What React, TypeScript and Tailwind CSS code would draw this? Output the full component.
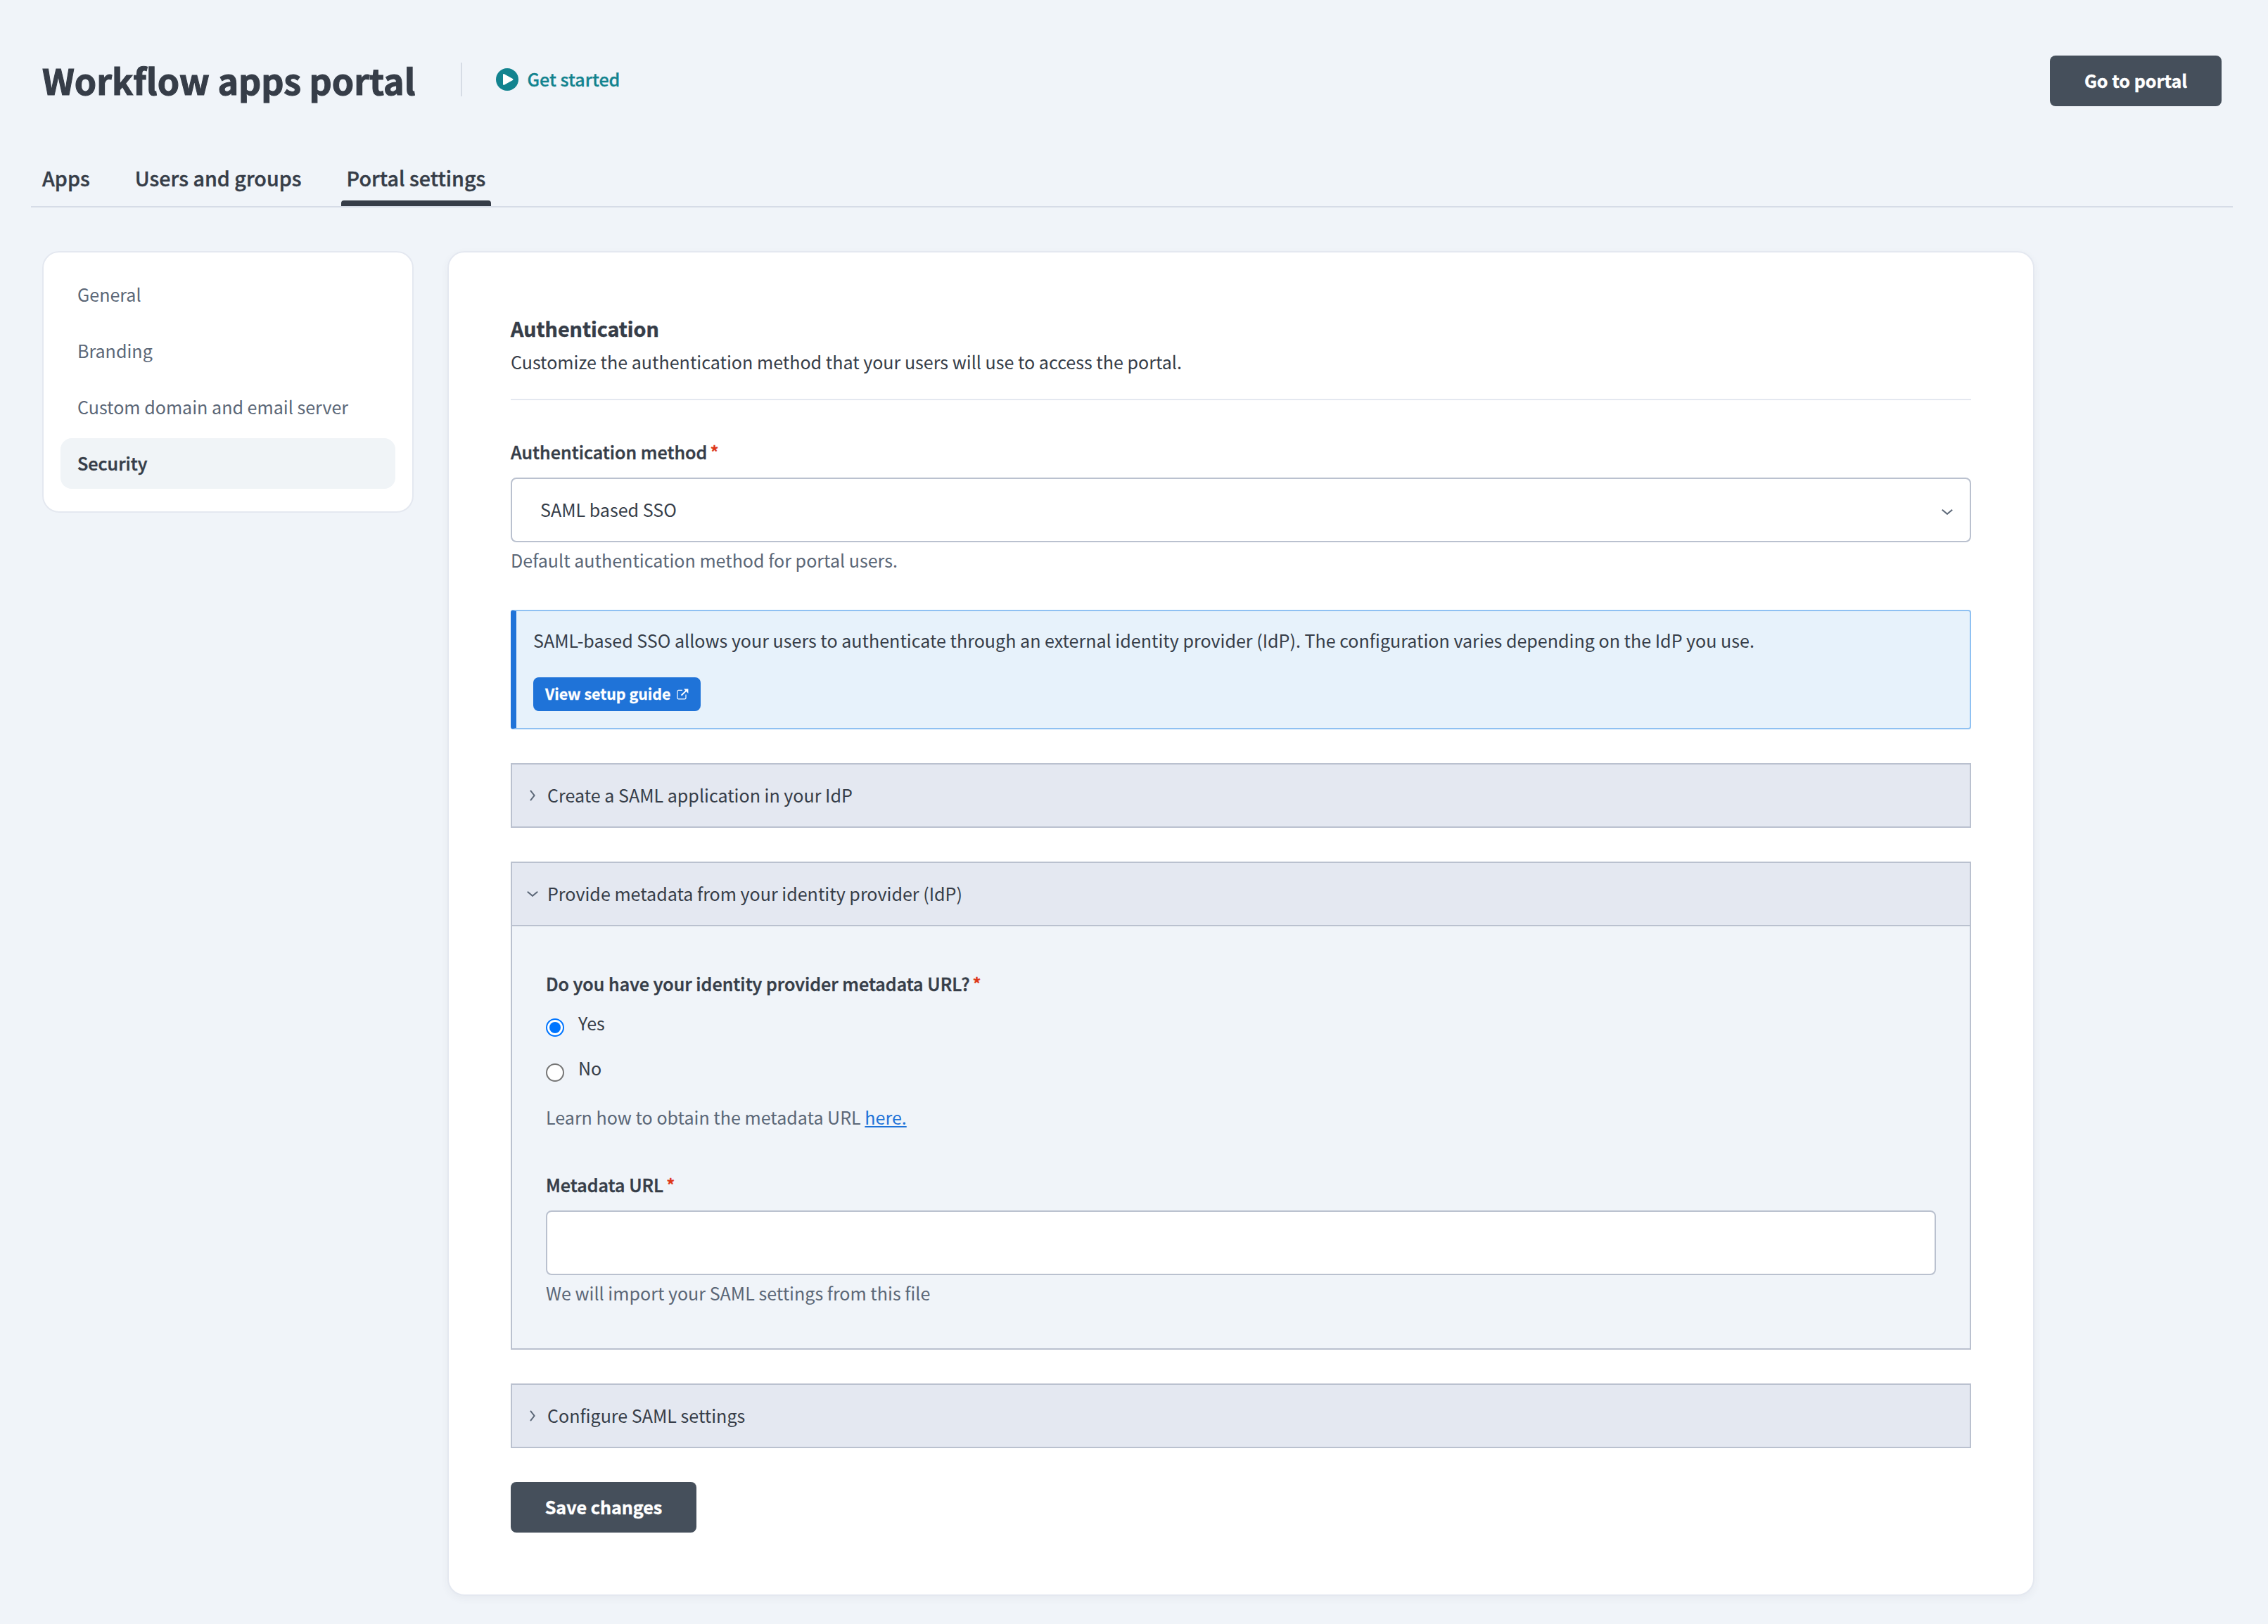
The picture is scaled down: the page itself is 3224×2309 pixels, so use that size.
import type { ReactNode } from "react";

const tabs = ["Apps", "Users and groups", "Portal settings"];

const sections = ["General", "Branding", "Custom domain and email server", "Security"];

const ChevronRight = () => (
  <svg width="8" height="16" viewBox="0 0 8 16" fill="none" className="shrink-0">
    <path d="M1 0.8L6.6 8L1 15.2" stroke="#5b6777" strokeWidth="2" />
  </svg>
);

const ChevronDown = () => (
  <svg width="16" height="8" viewBox="0 0 16 8" fill="none" className="shrink-0">
    <path d="M0.8 0.8L8 6.8L15.2 0.8" stroke="#5b6777" strokeWidth="2" />
  </svg>
);

const PlayIcon = () => (
  <svg width="32" height="32" viewBox="0 0 32 32" className="shrink-0">
    <circle cx="16" cy="16" r="16" fill="#12838f" />
    <path d="M10 9.2c0-.9.9-1.4 1.7-1l12.2 6.9c.8.4.8 1.4 0 1.8l-12.2 6.9c-.8.4-1.7-.1-1.7-1z" fill="#fff" />
  </svg>
);

const ExternalIcon = () => (
  <svg width="17" height="16" viewBox="0 0 17 16" fill="none" stroke="#fff" className="shrink-0">
    <path d="M8 2.4H2.6A1.6 1.6 0 0 0 1 4v9.2a1.6 1.6 0 0 0 1.6 1.6h8.8a1.6 1.6 0 0 0 1.6-1.6V8.6" strokeWidth="1.2" />
    <path d="M6.5 9.8L14 2.4" strokeWidth="1.9" />
    <path d="M10 .6h6.4V7z" fill="#fff" stroke="none" />
  </svg>
);

const Label = ({ children }: { children: ReactNode }) => (
  <div className="font-medium tracking-[0.06px]">
    <span className="[-webkit-text-stroke:0.5px]">{children}</span>
    <span className="ml-1 text-[#de3618] [-webkit-text-stroke:0.5px]">*</span>
  </div>
);

const PanelHeader = ({ title, open = false }: { title: string; open?: boolean }) => (
  <div className="flex h-[88px] items-center bg-[#e4e8f1]">
    <div className="flex w-[50px] justify-center pl-2">{open ? <ChevronDown /> : <ChevronRight />}</div>
    <span className="pb-0.5">{title}</span>
  </div>
);

const Radio = ({ label, checked = false }: { label: string; checked?: boolean }) => (
  <div className="flex">
    <span
      className={
        checked
          ? "mt-[15px] flex size-[26px] items-center justify-center rounded-full border-2 border-[#0075ff] bg-white"
          : "mt-[15px] size-[26px] rounded-full border-2 border-[#767676] bg-white"
      }
    >
      {checked && <span className="size-4 rounded-full bg-[#0075ff]" />}
    </span>
    <span className="ml-5">{label}</span>
  </div>
);

const App = () => {
  return (
    <div className="min-h-[2309px] w-full bg-[#f0f4f9] pt-[79px] pb-10 font-['Noto_Sans_CJK_SC',sans-serif] text-[25.07px] leading-[42px] text-[#363d48]">
      {/* Page header */}
      <header className="flex h-[72px] items-center justify-between pr-[66px] pl-[60px]">
        <div className="flex items-center pb-1">
          <h1 className="text-[50.13px] leading-[68px] font-bold [-webkit-text-stroke:1.1px]">Workflow apps portal</h1>
          <div className="ml-[65px] h-12 w-0.5 bg-[#d6dce5]" />
          <div className="ml-12 flex items-center gap-3 font-medium text-[#12838f]">
            <PlayIcon />
            <span className="pb-0.5 [-webkit-text-stroke:0.3px]">Get started</span>
          </div>
        </div>
        <button className="flex h-[72px] w-[244px] items-center justify-center rounded-lg bg-[#454f5b] pb-0.5 font-bold text-white [-webkit-text-stroke:0.4px]">
          Go to portal
        </button>
      </header>

      {/* Tabs */}
      <nav className="mt-[82px] mr-[50px] ml-11 flex gap-12 border-b-2 border-[#d6dce7] pl-2 text-[28.65px] leading-10 font-medium tracking-[0.03px] [-webkit-text-stroke:0.4px]">
        {tabs.map((tab) => (
          <div key={tab}>
            <div className="px-2 pb-3">{tab}</div>
            <div className={tab === "Portal settings" ? "h-2 rounded-t bg-[#363d48]" : "h-2"} />
          </div>
        ))}
      </nav>

      <div className="mt-[62px] flex items-start gap-12 pl-[60px]">
        {/* Settings sections */}
        <aside className="flex w-[528px] flex-col gap-2 rounded-3xl border-2 border-[#e4e8f0] bg-white p-6 pb-8">
          {sections.map((section) => (
            <div
              key={section}
              className={
                section === "Security"
                  ? "flex h-[72px] items-center rounded-2xl bg-[#f0f4f7] px-6 pb-0.5 font-medium tracking-[0.06px] [-webkit-text-stroke:0.5px]"
                  : "flex h-[72px] items-center px-6 pb-0.5 text-[#5b6777]"
              }
            >
              {section}
            </div>
          ))}
        </aside>

        <main className="w-[2256px] rounded-3xl border-2 border-[#e4e8f0] bg-white p-[88px] shadow-[0_4px_12px_rgba(54,61,72,0.05)]">
          <div className="border-b-2 border-[#e4e8f0] pb-8">
            <h2 className="text-[28.65px] leading-[39px] font-bold [-webkit-text-stroke:0.5px]">Authentication</h2>
            <p className="mt-[7px]">Customize the authentication method that your users will use to access the portal.</p>
          </div>

          {/* Authentication method */}
          <div className="mt-[52px]">
            <Label>Authentication method</Label>
            <div className="mt-4 flex h-[92px] items-center justify-between rounded-lg border-2 border-[#bac1cf] pr-6 pl-10">
              <span className="pb-0.5">SAML based SSO</span>
              <span className="pt-1.5">
                <ChevronDown />
              </span>
            </div>
            <p className="mt-1 text-[#5b6777]">Default authentication method for portal users.</p>
          </div>

          <div className="mt-[50px] rounded border-2 border-l-8 border-[#8fc1f2] border-l-[#1f73d8] bg-[#e7f2fb] px-6 pt-5 pb-6">
            <p>
              SAML-based SSO allows your users to authenticate through an external identity provider (IdP). The
              configuration varies depending on the IdP you use.
            </p>
            <button className="mt-8 flex h-12 w-[238px] items-center rounded-lg bg-[#1f73d8] pl-[17px] text-[21.4px] font-bold text-white">
              <span className="w-[187px] pb-0.5 text-left whitespace-nowrap [-webkit-text-stroke:0.3px]">View setup guide</span>
              <ExternalIcon />
            </button>
          </div>

          {/* SAML configuration steps */}
          <div className="mt-12 border-2 border-[#bac1cf]">
            <PanelHeader title="Create a SAML application in your IdP" />
          </div>

          <div className="mt-12 border-2 border-[#bac1cf] bg-[#f0f4f9]">
            <PanelHeader title="Provide metadata from your identity provider (IdP)" open />
            <div className="border-t-2 border-[#bac1cf] px-12 pt-[60px] pb-[58px]">
              <Label>Do you have your identity provider metadata URL?</Label>
              <div className="mt-3.5 flex flex-col gap-[22px]">
                <Radio label="Yes" checked />
                <Radio label="No" />
              </div>
              <p className="mt-7 text-[#5b6777]">
                Learn how to obtain the metadata URL{" "}
                <a className="text-[#1f73d8] underline decoration-2 underline-offset-2">here.</a>
              </p>
              <div className="mt-[54px]">
                <Label>Metadata URL</Label>
                <div className="mt-4 h-[92px] rounded-lg border-2 border-[#bac1cf] bg-white" />
                <p className="mt-1 text-[#5b6777]">We will import your SAML settings from this file</p>
              </div>
            </div>
          </div>

          <div className="mt-12 border-2 border-[#bac1cf]">
            <PanelHeader title="Configure SAML settings" />
          </div>

          <button className="mt-12 flex h-[72px] w-[264px] items-center justify-center rounded-lg bg-[#454f5b] pb-0.5 font-bold text-white [-webkit-text-stroke:0.4px]">
            Save changes
          </button>
        </main>
      </div>
    </div>
  );
};

export default App;
